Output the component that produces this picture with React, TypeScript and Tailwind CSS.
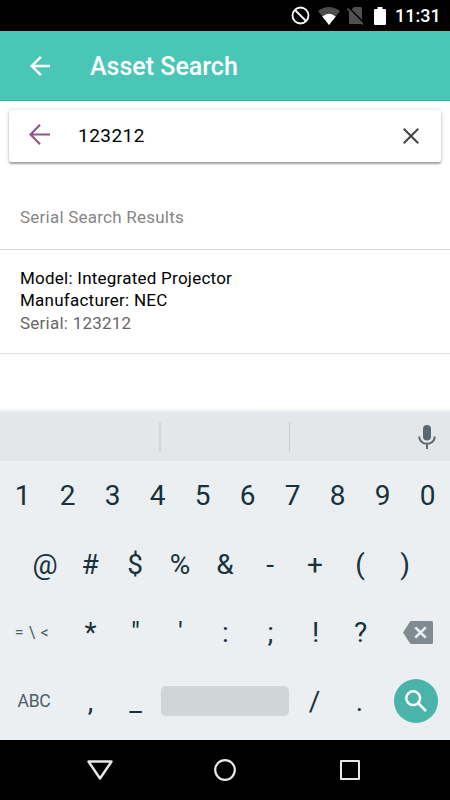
import type { ReactNode } from "react";

const digits = ["1", "2", "3", "4", "5", "6", "7", "8", "9", "0"];
const symbols = ["@", "#", "$", "%", "&", "-", "+", "(", ")"];
const punctuation = ["*", '"', "'", ":", ";", "!", "?"];

function Key({ children }: { children: ReactNode }) {
  return (
    <button className="w-[45px] h-full pt-0.5 flex items-center justify-center text-[28px] leading-none text-[#18323c]">
      {children}
    </button>
  );
}

function StatusBar() {
  return (
    <div className="h-[31px] bg-black text-white flex items-center">
      {/* do not disturb */}
      <svg className="ml-[291px] w-[19px] h-[19px]" viewBox="0 0 19 19" fill="none" stroke="#fff" strokeWidth="1.8">
        <circle cx="9.5" cy="9.5" r="8" />
        <path d="M4 4l11 11" />
      </svg>
      {/* wifi */}
      <svg className="ml-2 w-[22px] h-[18px]" viewBox="0 0 22 18">
        <path d="M0 4Q11-4 22 4L11 18z" fill="#4d4d4d" />
        <path d="M4.3 9.5Q11 4 17.7 9.5L11 18z" fill="#fff" />
      </svg>
      {/* no sim */}
      <svg className="ml-[7px] w-[18px] h-[18px]" viewBox="0 0 18 18">
        <path d="M7 0h6.5q1.5 0 1.5 1.5V17H2V5z" fill="#505050" />
        <path d="M1 0l17 17" stroke="#000" strokeWidth="1.6" />
        <path d="M.5 1.5l15.5 16" stroke="#555" strokeWidth="1.6" />
      </svg>
      {/* battery */}
      <svg className="ml-[9px] w-[12px] h-[18px]" viewBox="0 0 12 18" fill="#fff">
        <path d="M3.5 0h5v2h2.5q1 0 1 1v14q0 1-1 1H1q-1 0-1-1V3q0-1 1-1h2.5z" />
      </svg>
      <span className="ml-[9px] pt-px text-[18px] leading-none font-medium">11:31</span>
    </div>
  );
}

function SearchBar() {
  return (
    <div className="mx-[9px] mt-[9px] h-[52px] pb-px flex items-center rounded-[2px] bg-white shadow-[0_2px_2px_rgba(0,0,0,0.32),0_0_4px_rgba(0,0,0,0.16)]">
      <svg className="ml-[20px] -mt-0.5 w-[21px] h-[21px]" viewBox="0 0 21 21" fill="none" stroke="#915488" strokeWidth="2.1">
        <path d="M11 .8L1.5 10.5 11 20.2M1.5 10.5H21" />
      </svg>
      <span className="ml-[28px] text-[19px] leading-none tracking-[0.45px] text-black">123212</span>
      <svg className="ml-auto mr-[22px] w-4 h-4" viewBox="0 0 16 16" fill="none" stroke="#444" strokeWidth="2">
        <path d="M.7.7l14.6 14.6M15.3.7L.7 15.3" />
      </svg>
    </div>
  );
}

function Keyboard() {
  return (
    <div className="h-[332px] flex flex-col bg-[#ebeff2]">
      <div className="h-[5px] bg-linear-to-b from-white to-[#e4e5e6]" />
      {/* suggestion strip */}
      <div className="h-[48px] flex items-center bg-[#e3e7ea]">
        <div className="ml-[159px] w-[2px] h-[30px] bg-[#d2d7da]" />
        <div className="ml-[128px] w-px h-[30px] bg-[#c3cdd0]" />
        <svg className="ml-[128px] w-[18px] h-[24px]" viewBox="0 0 18 24">
          <rect x="5" y="0" width="8" height="15.5" rx="4" fill="#5a6970" />
          <path d="M1.2 11.5a7.8 7.3 0 0 0 15.6 0M9 19v5" fill="none" stroke="#5a6970" strokeWidth="2" />
        </svg>
      </div>
      <div className="h-[2px] bg-[#f0f1f2]" />
      <div className="h-[66px] flex pb-[3px]">
        {digits.map((key) => (
          <Key key={key}>{key}</Key>
        ))}
      </div>
      <div className="h-[69px] flex justify-center">
        {symbols.map((key) => (
          <Key key={key}>{key}</Key>
        ))}
      </div>
      <div className="h-[68px] flex">
        <button className="w-[68px] pl-px pr-[5px] pt-px text-[16px] tracking-[0.6px] text-[#4f5f66] whitespace-pre">= \ &lt;</button>
        {punctuation.map((key) => (
          <Key key={key}>{key}</Key>
        ))}
        <button className="w-[67px] pl-[3px] flex items-center justify-center">
          <svg className="w-[30px] h-[23px]" viewBox="0 0 30 23">
            <path d="M8.5 0H28.5Q30 0 30 1.5V21.5Q30 23 28.5 23H8.5Q7.5 23 6.8 22L0 11.5 6.8 1Q7.5 0 8.5 0z" fill="#7f8b90" />
            <path d="M12.3 6.3l10.4 10.4M22.7 6.3L12.3 16.7" stroke="#ebeff2" strokeWidth="2.6" />
          </svg>
        </button>
      </div>
      <div className="h-[70px] flex items-center">
        <button className="w-[68px] pt-px text-[17.5px] tracking-[-0.2px] text-[#4f5f66]">ABC</button>
        <Key>,</Key>
        <Key>_</Key>
        <div className="ml-[3px] mr-[3px] w-[128px] h-[30px] rounded-[5px] bg-[#d0d5d8]" />
        <Key>/</Key>
        <Key>.</Key>
        <button className="ml-[12px] w-[44px] h-[44px] rounded-full bg-[#4bb4aa] flex items-center justify-center">
          <svg className="w-[22px] h-[22px]" viewBox="0 0 22 22" fill="none" stroke="#fff" strokeWidth="2.5">
            <circle cx="8.2" cy="8.2" r="6.9" />
            <path d="M13 13l8 8" />
          </svg>
        </button>
      </div>
    </div>
  );
}

function NavBar() {
  return (
    <div className="h-[60px] bg-black flex items-center pl-[87px]">
      <svg className="w-[26px] h-[20px]" viewBox="0 0 26 20" fill="none" stroke="#e8e8e8" strokeWidth="2.4" strokeLinejoin="round">
        <path d="M1.5 1.5h23L13 18.5z" />
      </svg>
      <svg className="ml-[101px] w-[22px] h-[22px]" viewBox="0 0 22 22" fill="none" stroke="#e8e8e8" strokeWidth="2.2">
        <circle cx="11" cy="11" r="9.8" />
      </svg>
      <div className="ml-[104px] w-[20px] h-[20px] border-2 border-[#e8e8e8] rounded-[1px]" />
    </div>
  );
}

export default function App() {
  return (
    <div className="w-[450px] h-[800px] overflow-hidden flex flex-col bg-white font-[Roboto,sans-serif]">
      <StatusBar />
      <header className="h-[70px] flex items-center bg-[#4ac6b7] border-b border-[#35bba9] text-white">
        <svg className="ml-[30px] mt-px w-5 h-5" viewBox="4 4 16 16" fill="currentColor">
          <path d="M20 11H7.83l5.59-5.59L12 4l-8 8 8 8 1.41-1.41L7.83 13H20v-2z" />
        </svg>
        <h1 className="ml-[40px] pt-0.5 text-[25px] leading-none font-medium">Asset Search</h1>
      </header>
      <SearchBar />
      <main className="flex-1">
        <div className="h-[88px] pl-5 pt-[44px] border-b border-[#d5d5d5] text-[17px] leading-[22px] tracking-[0.23px] text-[#858585]">
          Serial Search Results
        </div>
        <div className="h-[104px] pl-5 pt-[16.5px] border-b border-[#dedede] text-[17px] leading-[22.5px] tracking-[0.24px] text-black">
          <p>Model: Integrated Projector</p>
          <p>Manufacturer: NEC</p>
          <p className="text-[#666]">Serial: 123212</p>
        </div>
      </main>
      <Keyboard />
      <NavBar />
    </div>
  );
}
